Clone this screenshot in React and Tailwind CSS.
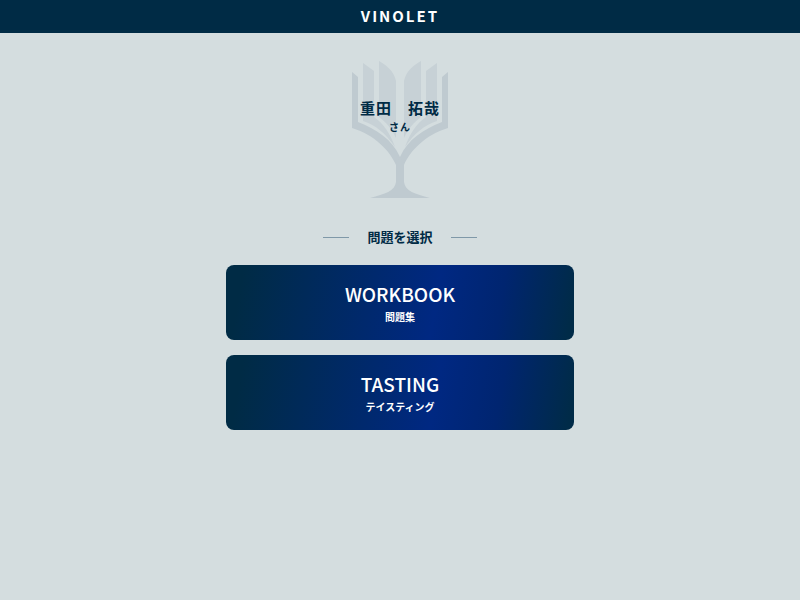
const menus = [
  { title: 'WORKBOOK', label: '問題集' },
  { title: 'TASTING', label: 'テイスティング' },
]

function GlassMark() {
  return (
    <svg viewBox="0 0 98 138" className="col-start-1 row-start-1 w-[98px] h-[138px]" aria-hidden="true">
      {/* Pages of the book, left half then mirrored */}
      <g id="half">
        <path d="M12 3 L23 11 V57 C32 63 39 73 44 87 C35 74 25 65 12 61 Z" fill="#c7d1d6" />
        <path d="M28 1 C37 6 43 12 45 21 V78 C41 69 35 62 28 57 Z" fill="#c7d1d6" />
        <path d="M1 12 L7 17 V62 C25 69 41 79 49 97 V105 H45 C39 91 24 75 1 68 Z" fill="#bfcad0" />
      </g>
      <use href="#half" transform="translate(98 0) scale(-1 1)" />
      {/* Stem and foot */}
      <path d="M45 103 L49 97 L53 103 V122 C54 131 64 134 79 138 H19 C34 134 44 131 45 122 Z" fill="#bfcad0" />
    </svg>
  )
}

export default function App() {
  return (
    <div className="min-h-screen bg-[#d4dddf] text-[#002b45] font-['Noto_Sans_CJK_JP','Noto_Sans',sans-serif]">
      <header className="pt-1.5 pb-[7px] bg-[#002b45] text-center">
        <h1 className="text-white text-[15px] leading-5 font-bold tracking-[2px]">VINOLET</h1>
      </header>

      <main className="flex flex-col items-center pt-[27px] px-4">
        {/* User name over the glass */}
        <div className="grid justify-items-center">
          <GlassMark />
          <div className="col-start-1 row-start-1 z-10 pt-9 text-center font-bold">
            <p className="text-[15px] leading-6 tracking-[1px] whitespace-pre">重田　拓哉</p>
            <p className="text-[10px] leading-[14px] tracking-[1px]">さん</p>
          </div>
        </div>

        <div className="mt-[29px] flex items-center gap-[18px]">
          <span className="w-[26px] h-px bg-[#7f98a8]"></span>
          <h2 className="text-[13px] leading-5 font-bold">問題を選択</h2>
          <span className="w-[26px] h-px bg-[#7f98a8]"></span>
        </div>

        <nav className="mt-[18px] w-full max-w-[348px] flex flex-col gap-[15px]">
          {menus.map((menu) => (
            <button
              key={menu.title}
              type="button"
              className="w-full pt-4 pb-[13px] rounded-lg text-white flex flex-col items-center bg-[linear-gradient(100deg,#002b45_5%,#002882_60%,#002570_78%,#002b48_98%)]"
            >
              <span className="text-[19px] leading-[26px] font-medium">{menu.title}</span>
              <span className="text-[10px] leading-5 font-bold">{menu.label}</span>
            </button>
          ))}
        </nav>
      </main>
    </div>
  )
}
